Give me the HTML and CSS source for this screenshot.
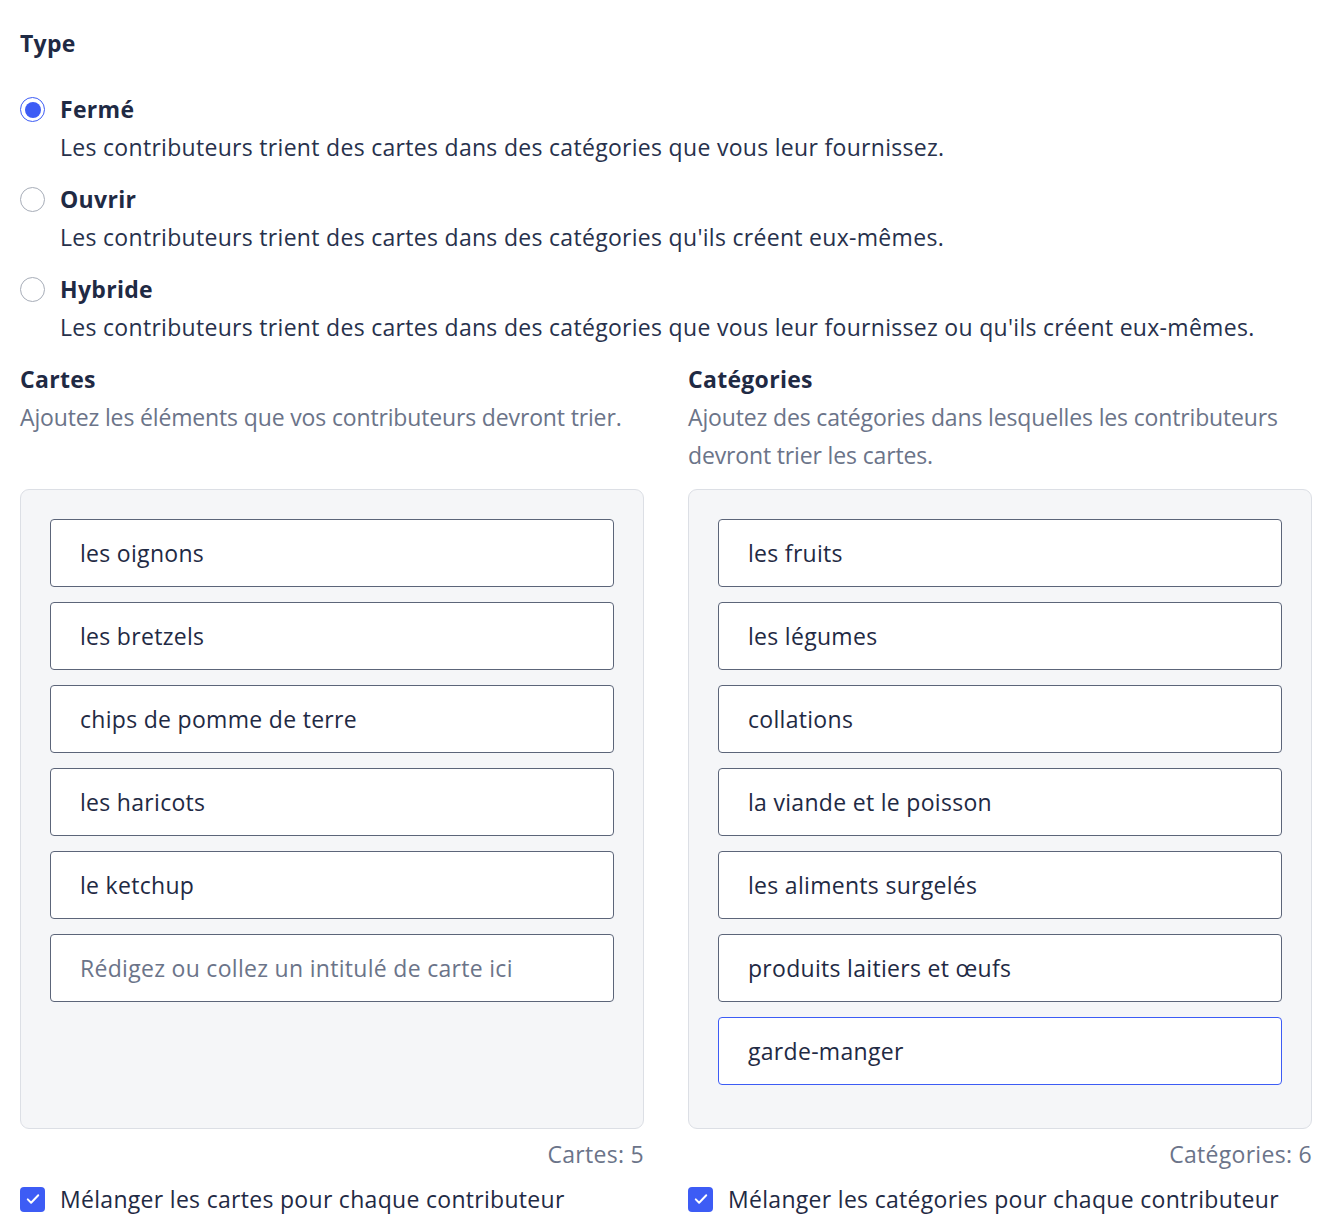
FILE: index.html
```html
<!DOCTYPE html>
<html lang="fr">
<head>
<meta charset="utf-8">
<title>Type</title>
<link rel="stylesheet" href="styles.css">
</head>
<body>
<main class="page">
  <h2 class="section-title">Type</h2>
  <div class="options">
    <label class="option">
      <span class="radio checked"><span class="dot"></span></span>
      <span class="option-text">
        <span class="option-label">Fermé</span>
        <span class="option-desc">Les contributeurs trient des cartes dans des catégories que vous leur fournissez.</span>
      </span>
    </label>
    <label class="option">
      <span class="radio"></span>
      <span class="option-text">
        <span class="option-label">Ouvrir</span>
        <span class="option-desc">Les contributeurs trient des cartes dans des catégories qu'ils créent eux-mêmes.</span>
      </span>
    </label>
    <label class="option">
      <span class="radio"></span>
      <span class="option-text">
        <span class="option-label">Hybride</span>
        <span class="option-desc">Les contributeurs trient des cartes dans des catégories que vous leur fournissez ou qu'ils créent eux-mêmes.</span>
      </span>
    </label>
  </div>

  <div class="columns">
    <section class="column">
      <div class="col-head">
        <h3 class="col-title">Cartes</h3>
        <p class="col-desc">Ajoutez les éléments que vos contributeurs devront trier.</p>
      </div>
      <div class="panel">
        <div class="field">les oignons</div>
        <div class="field">les bretzels</div>
        <div class="field">chips de pomme de terre</div>
        <div class="field">les haricots</div>
        <div class="field">le ketchup</div>
        <div class="field placeholder">Rédigez ou collez un intitulé de carte ici</div>
      </div>
      <div class="count">Cartes: 5</div>
      <label class="check-row">
        <span class="checkbox"><svg viewBox="0 0 24 24" width="18" height="18"><path d="M5 12.5l4.5 4.5L19 7" fill="none" stroke="#fff" stroke-width="2.6" stroke-linecap="round" stroke-linejoin="round"/></svg></span>
        <span class="check-label">Mélanger les cartes pour chaque contributeur</span>
      </label>
    </section>
    <section class="column">
      <div class="col-head">
        <h3 class="col-title">Catégories</h3>
        <p class="col-desc">Ajoutez des catégories dans lesquelles les contributeurs devront trier les cartes.</p>
      </div>
      <div class="panel">
        <div class="field">les fruits</div>
        <div class="field">les légumes</div>
        <div class="field">collations</div>
        <div class="field">la viande et le poisson</div>
        <div class="field">les aliments surgelés</div>
        <div class="field">produits laitiers et œufs</div>
        <div class="field focused">garde-manger</div>
      </div>
      <div class="count">Catégories: 6</div>
      <label class="check-row">
        <span class="checkbox"><svg viewBox="0 0 24 24" width="18" height="18"><path d="M5 12.5l4.5 4.5L19 7" fill="none" stroke="#fff" stroke-width="2.6" stroke-linecap="round" stroke-linejoin="round"/></svg></span>
        <span class="check-label">Mélanger les catégories pour chaque contributeur</span>
      </label>
    </section>
  </div>
</main>
</body>
</html>
```

FILE: styles.css
```css
* { box-sizing: border-box; }
html, body { margin: 0; padding: 0; background: #fff; }
body {
  font-family: "Open Sans", Lato, "Liberation Sans", sans-serif;
  color: #1f2a44;
  font-size: 23px;
  letter-spacing: 0.3px;
}
.page {
  padding: 26px 22px 0 20px;
}
.section-title {
  margin: 0;
  font-size: 23px;
  font-weight: 700;
  line-height: 34px;
  color: #1f2a44;
}
.options {
  margin-top: 30px;
  display: flex;
  flex-direction: column;
  gap: 14px;
}
.option {
  display: flex;
  gap: 15px;
  align-items: flex-start;
}
.radio {
  flex: none;
  width: 25px;
  height: 25px;
  border-radius: 50%;
  border: 1px solid #a7adb8;
  margin-top: 7px;
  display: flex;
  align-items: center;
  justify-content: center;
  background: #fff;
}
.radio.checked { border-color: #3d5cf5; }
.dot {
  width: 16px;
  height: 16px;
  border-radius: 50%;
  background: #3d5cf5;
}
.option-text { display: flex; flex-direction: column; }
.option-label {
  font-weight: 700;
  line-height: 38px;
}
.option-desc {
  line-height: 38px;
  color: #27314c;
}
.columns {
  margin-top: 14px;
  display: grid;
  grid-template-columns: 1fr 1fr;
  grid-template-rows: auto auto auto auto;
  column-gap: 44px;
}
.column {
  display: grid;
  grid-row: span 4;
  grid-template-rows: subgrid;
}
.col-head { padding-bottom: 15px; }
.col-title {
  margin: 0;
  font-size: 23px;
  font-weight: 700;
  line-height: 38px;
}
.col-desc {
  margin: 0;
  color: #6b7489;
  line-height: 38px;
  letter-spacing: -0.15px;
}
.panel {
  background: #f5f6f8;
  border: 1px solid #dcdfe5;
  border-radius: 9px;
  padding: 29px 29px 43px;
  display: flex;
  flex-direction: column;
  gap: 15px;
}
.field {
  height: 68px;
  border: 1px solid #5c6579;
  border-radius: 4px;
  background: #fff;
  padding: 0 29px;
  display: flex;
  align-items: center;
  color: #1f2a44;
}
.field.placeholder { color: #6b7489; }
.field.focused { border-color: #3d5cf5; }
.count {
  text-align: right;
  color: #6b7489;
  line-height: 50px;
}
.check-row {
  display: flex;
  align-items: center;
  gap: 15px;
  margin-top: 1px;
  line-height: 38px;
}
.checkbox {
  flex: none;
  width: 25px;
  height: 25px;
  border-radius: 4px;
  background: #3d5cf5;
  display: flex;
  align-items: center;
  justify-content: center;
}
```
